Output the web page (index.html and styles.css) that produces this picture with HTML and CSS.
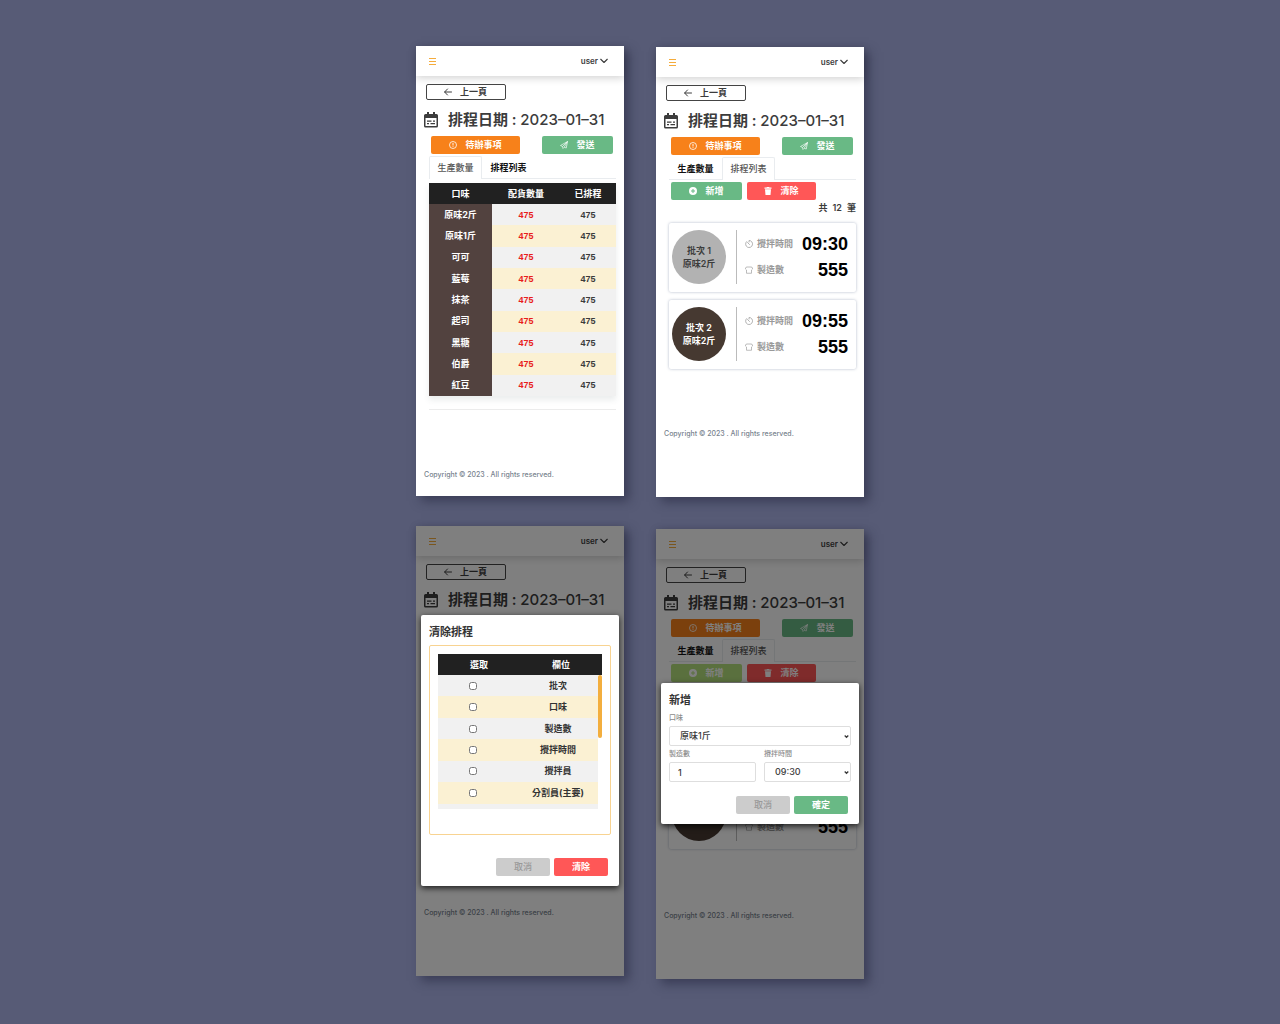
FILE: index.html
```html
<!DOCTYPE html>
<html lang="zh-Hant">
<head>
<meta charset="utf-8">
<meta name="viewport" content="width=device-width, initial-scale=1">
<title>排程日期</title>
<link rel="stylesheet" href="styles.css">
</head>
<body>
<svg class="sprite" aria-hidden="true">
  <symbol id="i-menu" viewBox="0 0 8 8"><path d="M0 1.500h7M0 4.500h7M0 7.500h7" stroke="currentColor" stroke-width="1" fill="none"/></symbol>
  <symbol id="i-down" viewBox="0 0 16 16"><path d="M1.5 4.5 8 11l6.500-6.500" stroke="currentColor" stroke-width="2.200" fill="none" stroke-linecap="round" stroke-linejoin="round"/></symbol>
  <symbol id="i-pick" viewBox="0 0 5 5"><path d="M.7 1.500 2.500 3.300 4.300 1.500" stroke="currentColor" stroke-width="1.300" fill="none"/></symbol>
  <symbol id="i-back" viewBox="0 0 16 16"><path d="M15 8H1.500M7 2 1.200 8 7 14" stroke="currentColor" stroke-width="2" fill="none" stroke-linecap="round" stroke-linejoin="round"/></symbol>
  <symbol id="i-cal" viewBox="0 0 28 32"><path d="M6 0h4v4h8V0h4v4h3a3 3 0 0 1 3 3v21a3 3 0 0 1-3 3H3a3 3 0 0 1-3-3V7a3 3 0 0 1 3-3h3zM3 12v16h22V12z" fill="currentColor" fill-rule="evenodd"/><path d="M6 18h9M18 18h4M6 23h4M13 23h9" stroke="currentColor" stroke-width="2.500"/></symbol>
  <symbol id="i-alert" viewBox="0 0 16 16"><circle cx="8" cy="8" r="7" fill="none" stroke="currentColor" stroke-width="1.600"/><path d="M8 4v5M8 10.500v1.500" stroke="currentColor" stroke-width="1.800"/></symbol>
  <symbol id="i-send" viewBox="0 0 16 16"><path d="M15 1 1 9l4 2 1 4 2.500-2.500 4 1.500zM15 1 5 11M15 1 8.500 12.500" fill="none" stroke="currentColor" stroke-width="1.300" stroke-linejoin="round"/></symbol>
  <symbol id="i-plus" viewBox="0 0 16 16"><path d="M8 0a8 8 0 1 1 0 16A8 8 0 0 1 8 0zM7 4v3H4v2h3v3h2V9h3V7H9V4z" fill="currentColor" fill-rule="evenodd"/></symbol>
  <symbol id="i-trash" viewBox="0 0 16 16"><path d="M1 1h4l1-1h4l1 1h4v2.500H1zM2 4.500h12L13 16H3z" fill="currentColor"/></symbol>
  <symbol id="i-time" viewBox="0 0 16 16"><path d="M8 4V1a7 7 0 1 1-5 2.200M5 5l4 4" fill="none" stroke="currentColor" stroke-width="1.500" stroke-linecap="round"/></symbol>
  <symbol id="i-bread" viewBox="0 0 16 16"><path d="M3 14.500V8C-.5 6 .5 2 4 2h8c3.500 0 4.500 4 1 6v6.500z" fill="none" stroke="currentColor" stroke-width="1.300" stroke-linejoin="round"/></symbol>
</svg>

<main class="board">
  <div class="column">
    <section class="phone">
      <header class="topbar">
        <button class="plain menu" aria-label="選單"><svg><use href="#i-menu"/></svg></button>
        <button class="plain user">user <svg><use href="#i-down"/></svg></button>
      </header>
      <div class="page">
        <button class="back"><svg><use href="#i-back"/></svg>上一頁</button>
        <h1 class="title"><svg><use href="#i-cal"/></svg>排程日期 :&nbsp;<span>2023–01–31</span></h1>
        <div class="actions">
          <button class="btn todo"><svg><use href="#i-alert"/></svg>待辦事項</button>
          <button class="btn send"><svg><use href="#i-send"/></svg>發送</button>
        </div>
        <nav class="tabs"><a class="tab active" href="#">生產數量</a><a class="tab" href="#">排程列表</a></nav>
        <table class="amounts">
          <thead><tr><th>口味</th><th>配貨數量</th><th>已排程</th></tr></thead>
          <tbody>
            <tr><th>原味2斤</th><td>475</td><td>475</td></tr>
            <tr><th>原味1斤</th><td>475</td><td>475</td></tr>
            <tr><th>可可</th><td>475</td><td>475</td></tr>
            <tr><th>藍莓</th><td>475</td><td>475</td></tr>
            <tr><th>抹茶</th><td>475</td><td>475</td></tr>
            <tr><th>起司</th><td>475</td><td>475</td></tr>
            <tr><th>黑糖</th><td>475</td><td>475</td></tr>
            <tr><th>伯爵</th><td>475</td><td>475</td></tr>
            <tr><th>紅豆</th><td>475</td><td>475</td></tr>
          </tbody>
        </table>
        <hr class="rule">
      </div>
      <footer class="copy">Copyright © 2023 . All rights reserved.</footer>
    </section>

    <section class="phone">
      <header class="topbar">
        <button class="plain menu" aria-label="選單"><svg><use href="#i-menu"/></svg></button>
        <button class="plain user">user <svg><use href="#i-down"/></svg></button>
      </header>
      <div class="page list">
        <button class="back"><svg><use href="#i-back"/></svg>上一頁</button>
        <h1 class="title"><svg><use href="#i-cal"/></svg>排程日期 :&nbsp;<span>2023–01–31</span></h1>
      </div>
      <footer class="copy">Copyright © 2023 . All rights reserved.</footer>
      <div class="shade">
        <form class="modal clear">
          <h2>清除排程</h2>
          <div class="frame">
            <div class="scroller">
              <table class="fields">
                <thead><tr><th>選取</th><th>欄位</th></tr></thead>
                <tbody>
                  <tr><td><input type="checkbox" id="f1"></td><td><label for="f1">批次</label></td></tr>
                  <tr><td><input type="checkbox" id="f2"></td><td><label for="f2">口味</label></td></tr>
                  <tr><td><input type="checkbox" id="f3"></td><td><label for="f3">製造數</label></td></tr>
                  <tr><td><input type="checkbox" id="f4"></td><td><label for="f4">攪拌時間</label></td></tr>
                  <tr><td><input type="checkbox" id="f5"></td><td><label for="f5">攪拌員</label></td></tr>
                  <tr><td><input type="checkbox" id="f6"></td><td><label for="f6">分割員(主要)</label></td></tr>
                  <tr><td></td><td></td></tr>
                </tbody>
              </table>
              <div class="track"></div>
            </div>
          </div>
          <div class="buttons">
            <button type="button" class="btn cancel">取消</button>
            <button type="button" class="btn danger">清除</button>
          </div>
        </form>
      </div>
    </section>
  </div>

  <div class="column second">
    <section class="phone">
      <header class="topbar">
        <button class="plain menu" aria-label="選單"><svg><use href="#i-menu"/></svg></button>
        <button class="plain user">user <svg><use href="#i-down"/></svg></button>
      </header>
      <div class="page list">
        <button class="back"><svg><use href="#i-back"/></svg>上一頁</button>
        <h1 class="title"><svg><use href="#i-cal"/></svg>排程日期 :&nbsp;<span>2023–01–31</span></h1>
        <div class="actions">
          <button class="btn todo"><svg><use href="#i-alert"/></svg>待辦事項</button>
          <button class="btn send"><svg><use href="#i-send"/></svg>發送</button>
        </div>
        <nav class="tabs"><a class="tab" href="#">生產數量</a><a class="tab active" href="#">排程列表</a></nav>
        <div class="tools">
          <button class="btn add"><svg><use href="#i-plus"/></svg>新增</button>
          <button class="btn danger"><svg><use href="#i-trash"/></svg>清除</button>
        </div>
        <p class="count"><span>共</span><span>12</span><span>筆</span></p>
        <article class="card">
          <div class="batch">批次 1<br>原味2斤</div>
          <dl>
            <div><dt><svg><use href="#i-time"/></svg>攪拌時間</dt><dd>09:30</dd></div>
            <div><dt><svg><use href="#i-bread"/></svg>製造數</dt><dd>555</dd></div>
          </dl>
        </article>
        <article class="card">
          <div class="batch dark">批次 2<br>原味2斤</div>
          <dl>
            <div><dt><svg><use href="#i-time"/></svg>攪拌時間</dt><dd>09:55</dd></div>
            <div><dt><svg><use href="#i-bread"/></svg>製造數</dt><dd>555</dd></div>
          </dl>
        </article>
      </div>
      <footer class="copy">Copyright © 2023 . All rights reserved.</footer>
    </section>

    <section class="phone">
      <header class="topbar">
        <button class="plain menu" aria-label="選單"><svg><use href="#i-menu"/></svg></button>
        <button class="plain user">user <svg><use href="#i-down"/></svg></button>
      </header>
      <div class="page list">
        <button class="back"><svg><use href="#i-back"/></svg>上一頁</button>
        <h1 class="title"><svg><use href="#i-cal"/></svg>排程日期 :&nbsp;<span>2023–01–31</span></h1>
        <div class="actions">
          <button class="btn todo"><svg><use href="#i-alert"/></svg>待辦事項</button>
          <button class="btn send"><svg><use href="#i-send"/></svg>發送</button>
        </div>
        <nav class="tabs"><a class="tab" href="#">生產數量</a><a class="tab active" href="#">排程列表</a></nav>
        <div class="tools">
          <button class="btn add pressed"><svg><use href="#i-plus"/></svg>新增</button>
          <button class="btn danger"><svg><use href="#i-trash"/></svg>清除</button>
        </div>
        <article class="card last">
          <div class="batch dark"></div>
          <dl>
            <div></div>
            <div><dt><svg><use href="#i-bread"/></svg>製造數</dt><dd>555</dd></div>
          </dl>
        </article>
      </div>
      <footer class="copy">Copyright © 2023 . All rights reserved.</footer>
      <div class="shade low">
        <form class="modal create">
          <h2>新增</h2>
          <div class="form">
            <div class="field wide">
              <label for="taste">口味</label>
              <div class="pick"><select id="taste"><option>原味1斤</option></select><svg><use href="#i-pick"/></svg></div>
            </div>
            <div class="field">
              <label for="amount">製造數</label>
              <input id="amount" type="text" value="1">
            </div>
            <div class="field">
              <label for="time">攪拌時間</label>
              <div class="pick"><select id="time"><option>09:30</option></select><svg><use href="#i-pick"/></svg></div>
            </div>
          </div>
          <div class="buttons">
            <button type="button" class="btn cancel">取消</button>
            <button type="button" class="btn send">確定</button>
          </div>
        </form>
      </div>
    </section>
  </div>
</main>
</body>
</html>
```

FILE: styles.css
```css
* { box-sizing: border-box; }

body {
  margin: 0;
  min-height: 100vh;
  background: #575b76;
  color: #3c3c3c;
  font: 500 9px/12px Inter, "Noto Sans CJK TC", sans-serif;
}

button, input, select { font: inherit; color: inherit; margin: 0; padding: 0; }
button { cursor: pointer; }
svg { width: 8px; height: 8px; flex: none; }
.sprite { display: none; }

.board {
  display: flex;
  flex-wrap: wrap;
  justify-content: center;
  gap: 32px;
  padding: 46px 16px 40px;
}
.column { display: flex; flex-direction: column; gap: 30px; }
.second { gap: 32px; padding-top: 1px; }

.phone {
  position: relative;
  display: flex;
  flex-direction: column;
  width: 208px;
  min-height: 450px;
  background: #fff;
  box-shadow: 5px 5px 10px rgba(30, 32, 55, .5);
}

.topbar {
  display: flex;
  align-items: center;
  justify-content: space-between;
  height: 30px;
  padding: 0 16px 0 13px;
  box-shadow: 0 2px 8px rgba(0, 0, 0, .18);
}
.plain { display: flex; align-items: center; gap: 2px; border: 0; background: none; }
.menu { color: #f5ac3c; }
.user { font-size: 8px; font-weight: 600; }

.page { display: flex; flex-direction: column; padding: 8px 8px 0 13px; }
.list { min-height: 292px; }

.back {
  display: flex;
  align-items: center;
  align-self: flex-start;
  gap: 8px;
  width: 80px;
  height: 16px;
  margin-left: -3px;
  padding-left: 17px;
  border: 1px solid #444;
  border-radius: 2px;
  background: none;
  font-weight: 700;
}
.title {
  display: flex;
  align-items: center;
  height: 24px;
  margin: 8px 0 4px -5px;
  font-size: 15px;
  line-height: 24px;
  font-weight: 600;
  white-space: nowrap;
}
.title span { font-weight: 500; }
.title svg { width: 14px; height: 16px; margin-right: 10px; }

.btn {
  display: flex;
  align-items: center;
  justify-content: center;
  gap: 8px;
  height: 18px;
  border: 0;
  border-radius: 2px;
  color: #fff;
  font-weight: 700;
}
.actions { display: flex; justify-content: space-between; padding: 0 3px 0 2px; }
.todo { width: 89px; background: #f7811a; }
.send { width: 71px; background: #69b985; }
.add { width: 71px; background: #69b985; }
.pressed { background: #b4e07c; }
.danger { width: 69px; background: #ff5757; }
.cancel { width: 54px; background: #ccc; color: #999; font-weight: 500; }

.tabs { display: flex; height: 23px; margin-top: 2px; border-bottom: 1px solid #e9ecef; }
.tab {
  width: 53px;
  height: 23px;
  border: 1px solid transparent;
  border-bottom: 0;
  border-radius: 2px 2px 0 0;
  color: #111;
  font-weight: 700;
  line-height: 21px;
  text-align: center;
  text-decoration: none;
  white-space: nowrap;
}
.active { border-color: #e9ecef; background: #fff; color: #555; font-weight: 500; }

table { border-collapse: collapse; table-layout: fixed; text-align: center; }
th, td { padding: 0; font-weight: 600; }
thead th { height: 21px; background: #212121; color: #fff; font-weight: 700; }
tbody tr { background: #f1f1f1; }
tbody tr:nth-child(even) { background: #fbf1d3; }

.amounts { width: 100%; height: 213px; margin-top: 4px; box-shadow: 0 4px 6px rgba(60, 80, 80, .1); }
.amounts th:first-child { width: 63px; }
.amounts th:last-child { width: 56px; }
.amounts tbody th { background: #52423f; color: #fff; font-weight: 700; }
.amounts td { font: 700 9px/12px "Liberation Sans", sans-serif; }
.amounts td:nth-child(2) { color: #e81c1c; }
.rule { width: 100%; height: 1px; margin: 13px 0 0; border: 0; background: #ececec; }

.copy { margin-top: 59px; padding-left: 8px; color: #78838e; font-size: 7px; }

.tools { display: flex; gap: 5px; margin-top: 2px; padding-left: 2px; }
.count { display: flex; justify-content: flex-end; gap: 5px; margin: 2px 0 9px; font-weight: 600; }
.card {
  display: flex;
  height: 69px;
  margin-bottom: 8px;
  padding: 7px 8px 8px 3px;
  border-radius: 2px;
  box-shadow: 0 0 3px rgba(60, 80, 120, .4);
}
.card:last-child { margin-bottom: 0; }
.last { margin-top: 98px; }
.batch {
  display: flex;
  align-items: center;
  width: 54px;
  height: 54px;
  justify-content: center;
  border-radius: 50%;
  background: #b2b2b2;
  font-weight: 600;
  line-height: 13px;
  text-align: center;
}
.dark { background: #463931; color: #fff; }
.card dl { flex: 1; margin: 0 0 0 10px; padding: 1px 0 0 8px; border-left: 1px solid #bbb; }
.card dl div { display: flex; align-items: center; justify-content: space-between; height: 26px; }
.card dt { display: flex; align-items: center; gap: 4px; color: #999; font-weight: 600; }
.card dd { margin: 0; color: #000; font: 700 18px/24px "Liberation Sans", sans-serif; }

.shade {
  position: absolute;
  inset: 0;
  padding: 89px 5px 0;
  background: rgba(0, 0, 0, .5);
}
.low { padding-top: 154px; }
.modal {
  padding: 8px;
  border-radius: 2px;
  background: #fff;
  box-shadow: 0 2px 6px rgba(0, 0, 0, .8);
}
.modal h2 { margin: 0; font-size: 11px; line-height: 18px; font-weight: 700; color: #333; }
.buttons { display: flex; justify-content: flex-end; gap: 4px; padding: 0 3px 2px 0; }
.buttons .btn { width: 54px; }

.frame { height: 190px; margin: 4px 0 23px; padding: 8px; border: 1px solid #f8d391; border-radius: 2px; }
.scroller { position: relative; height: 155px; overflow: hidden; }
.fields { width: 100%; height: 171px; }
.fields td { height: 21px; padding-right: 6px; color: #333; font-weight: 700; }
.fields td:first-child { padding-right: 12px; }
.fields input { display: block; width: 8px; height: 8px; margin: 0 auto; }
.track { position: absolute; top: 21px; right: 0; bottom: 0; width: 4px; background: #fff; }
.track::before { content: ""; display: block; height: 63px; border-radius: 2px; background: #f3ae3d; }

.form { display: grid; grid-template-columns: 1fr 1fr; gap: 2px 8px; padding: 3px 0 14px; }
.wide { grid-column: 1 / -1; }
.field label { display: block; margin-bottom: 2px; color: #8c8c8c; font-size: 7px; line-height: 12px; }
.field input, .field select {
  display: block;
  width: 100%;
  height: 20px;
  border: 1px solid #dedede;
  border-radius: 2px;
  background: #fff;
  padding-left: 8px;
  appearance: none;
}
.field select { padding-left: 10px; }
.pick { position: relative; }
.pick svg { position: absolute; top: 8px; right: 2px; width: 5px; height: 5px; }
```
